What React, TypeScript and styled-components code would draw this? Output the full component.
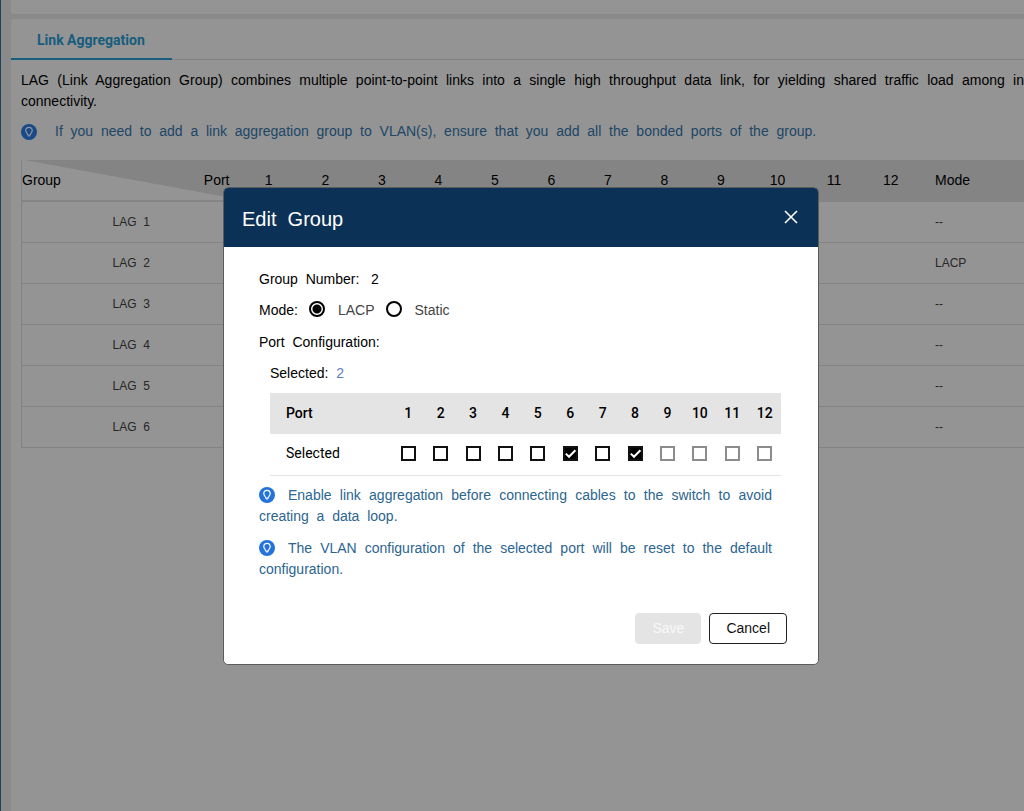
import React, { useState } from "react";
import styled, { createGlobalStyle } from "styled-components";

const Global = createGlobalStyle`
  * { box-sizing: border-box; }
  body { margin: 0; background: #eeeeee; font-family: "Liberation Sans", Arial, sans-serif; font-size: 14px; color: #000; overflow: hidden; }
`;

const Page = styled.div`
  display: flex;
  flex-direction: column;
  gap: 5px;
  min-height: 100vh;
  padding-left: 10px;
  border-left: 1px solid #3c70a0;
  background: #eeeeee;
`;

const Banner = styled.header`
  height: 14px;
  background: #fff;
  border-bottom-left-radius: 3px;
`;

const Panel = styled.main`
  flex: 1;
  background: #fff;
  border-top-left-radius: 3px;
  overflow: hidden;
`;

const TabBar = styled.nav`
  display: flex;
  height: 41px;
  border-bottom: 1px solid #dcdcdc;
`;

const Tab = styled.a`
  padding: 0 27px 0 26px;
  height: 41px;
  border-bottom: 2px solid #2ba0d8;
  font: bold 14px/42px Roboto, sans-serif;
  color: #2ba0d8;
  text-decoration: none;
`;

const Content = styled.div`
  padding: 10px 0 0 10px;
`;

const Intro = styled.p`
  margin: 0;
  line-height: 21px;
  text-align: justify;
  white-space: pre-wrap;
`;

const Note = styled.p`
  display: flex;
  align-items: center;
  gap: 18px;
  margin: 9px 0 0;
  line-height: 21px;
  white-space: pre-wrap;
  color: #3679b0;
`;

const GroupTable = styled.table`
  width: 100%;
  min-width: 1082px;
  margin-top: 18px;
  border-collapse: collapse;
  table-layout: fixed;
  font-size: 12px;
  color: #444;
  white-space: pre-wrap;

  th, td { height: 41px; padding: 0; border-bottom: 1px solid #e2e2e2; text-align: center; font-weight: normal; }
  thead th { font-size: 14px; background: #e4e4e4; color: #000; }
  tr > :first-child { border-left: 1px solid #e2e2e2; }
  tr > :last-child { padding-left: 16px; text-align: left; }
`;

const GroupCol = styled.col`
  width: 219px;
`;

const ModeCol = styled.col`
  width: 184px;
`;

const CornerLabels = styled.div`
  display: flex;
  justify-content: space-between;
  align-items: center;
  height: 40px;
  padding-right: 11px;
  background: linear-gradient(to top right, #fff 50%, #e4e4e4 51%);
`;

const Overlay = styled.div`
  position: fixed;
  inset: 0;
  display: flex;
  justify-content: center;
  align-items: flex-start;
  padding: 187px 0 0 18px;
  background: rgba(0, 0, 0, 0.42);
`;

const Dialog = styled.section`
  width: 596px;
  max-width: 100%;
  border: 1px solid #5c5c5c;
  border-radius: 5px;
  overflow: hidden;
  background: #fff;
  white-space: pre-wrap;
`;

const DialogHeader = styled.header`
  display: flex;
  justify-content: space-between;
  align-items: center;
  height: 59px;
  padding: 0 18px;
  background: #0c3156;
  color: #fff;
`;

const Title = styled.h2`
  margin: 0;
  padding-top: 3px;
  font-size: 20px;
  font-weight: normal;
`;

const CloseButton = styled.button`
  display: flex;
  padding: 2px 2px 4px;
  border: 0;
  background: none;
  color: #fff;
`;

const Body = styled.div`
  padding: 16px 37px 20px 35px;
`;

const Field = styled.div`
  display: flex;
  align-items: center;
  height: 31px;
`;

const ModeGroup = styled.fieldset`
  display: flex;
  align-items: center;
  height: 32px;
  margin: 0;
  padding: 0;
  border: 0;
`;

const Radio = styled.input`
  appearance: none;
  width: 16px;
  height: 16px;
  margin: 0 13px 3px 11px;
  border: 2px solid #000;
  border-radius: 50%;
  &:checked { background: radial-gradient(circle, #000 4px, #fff 5px); }
`;

const RadioLabel = styled.label`
  color: #444;
`;

const PortArea = styled.div`
  padding-left: 11px;
`;

const Count = styled.span`
  color: #5c7fbd;
`;

const PortTable = styled.table`
  width: 100%;
  margin-top: 5px;
  border-collapse: collapse;
  table-layout: fixed;
  font: 14px Roboto, sans-serif;
  th, td { height: 41px; padding: 0 0 2px; text-align: center; font-weight: 500; }
  thead { background: #e4e4e4; }
  tbody tr { border-bottom: 1px solid #e2e2e2; }
  tbody th { font-weight: normal; }
  tr > :first-child { padding-left: 16px; text-align: left; }
`;

const LabelCol = styled.col`
  width: 122px;
`;

const Check = styled.input`
  appearance: none;
  width: 15px;
  height: 15px;
  margin: 0;
  border: 2px solid #111;
  background: #fff;
  &:disabled { border-color: #8c8c8c; }
  &:checked { background: #000; }
`;

const CheckBox = styled.span`
  display: grid;
  justify-content: center;
  & > * { grid-area: 1 / 1; }
  svg { pointer-events: none; }
`;

const Hints = styled.div`
  display: flex;
  flex-direction: column;
  gap: 11px;
  padding: 9px 9px 0 0;
`;

const Hint = styled.p`
  margin: 0;
  line-height: 21px;
  text-align: justify;
  color: #2b6590;
  svg { margin-right: 13px; vertical-align: -3px; }
`;

const Actions = styled.footer`
  display: flex;
  justify-content: flex-end;
  gap: 8px;
  padding-top: 33px;
  margin-right: -6px;
`;

const Button = styled.button`
  height: 31px;
  padding: 0 16px;
  border: 1px solid #222;
  border-radius: 4px;
  background: #fff;
  color: #111;
  font: 14px "Liberation Sans", Arial, sans-serif;
  &:disabled { border-color: #e4e4e4; background: #e4e4e4; color: #f8f8f8; }
`;

const Bulb = ({ color = "#2373db" }: { color?: string }) => (
  <svg width="16" height="16" viewBox="0 0 16 16" aria-hidden="true">
    <circle cx="8" cy="8" r="8" fill={color} />
    <path
      d="M6.9 11.2C6.7 9.5 4.8 8.7 4.8 6.6a3.2 3.2 0 0 1 6.4 0c0 2.1-1.9 2.9-2.1 4.6z"
      fill="none"
      stroke="#fff"
      strokeWidth="1.2"
    />
    <path d="M7 12.2h2" stroke="#fff" strokeOpacity="0.7" />
  </svg>
);

const ports = Array.from({ length: 12 }, (_, i) => i + 1);
const groups = ["--", "LACP", "--", "--", "--", "--"];

export default function App() {
  const [mode, setMode] = useState("LACP");
  const [selected, setSelected] = useState([6, 8]);
  const toggle = (port: number) =>
    setSelected((s) => (s.includes(port) ? s.filter((p) => p !== port) : [...s, port]));

  return (
    <>
      <Global />
      <Page>
        <Banner />
        <Panel>
          <TabBar><Tab href="#lag">Link Aggregation</Tab></TabBar>
          <Content>
            <Intro>LAG  (Link  Aggregation  Group)  combines  multiple  point-to-point  links  into  a  single  high  throughput  data  link,  for  yielding  shared  traffic  load  among  in  connectivity.</Intro>
            <Note><Bulb color="#2a80ec" />If  you  need  to  add  a  link  aggregation  group  to  VLAN(s),  ensure  that  you  add  all  the  bonded  ports  of  the  group.</Note>
            <GroupTable>
              <colgroup>
                <GroupCol />
                {ports.map((p) => <col key={p} />)}
                <ModeCol />
              </colgroup>
              <thead>
                <tr>
                  <th><CornerLabels><span>Group</span><span>Port</span></CornerLabels></th>
                  {ports.map((p) => <th key={p}>{p}</th>)}
                  <th>Mode</th>
                </tr>
              </thead>
              <tbody>
                {groups.map((m, i) => (
                  <tr key={i}>
                    <td>{`LAG  ${i + 1}`}</td>
                    {ports.map((p) => <td key={p} />)}
                    <td>{m}</td>
                  </tr>
                ))}
              </tbody>
            </GroupTable>
          </Content>
        </Panel>
      </Page>
      <Overlay>
        <Dialog role="dialog" aria-modal="true" aria-labelledby="dialog-title">
          <DialogHeader>
            <Title id="dialog-title">Edit  Group</Title>
            <CloseButton aria-label="Close">
              <svg width="14" height="14" viewBox="0 0 14 14"><path d="M1 1l12 12M13 1L1 13" stroke="currentColor" strokeWidth="1.6" /></svg>
            </CloseButton>
          </DialogHeader>
          <Body>
            <Field>Group  Number:   2</Field>
            <ModeGroup>
              <span>Mode:</span>
              {["LACP", "Static"].map((m) => (
                <React.Fragment key={m}>
                  <Radio type="radio" name="mode" id={m} checked={mode === m} onChange={() => setMode(m)} />
                  <RadioLabel htmlFor={m}>{m}</RadioLabel>
                </React.Fragment>
              ))}
            </ModeGroup>
            <Field>Port  Configuration:</Field>
            <PortArea>
              <Field>Selected:  <Count>{selected.length}</Count></Field>
              <PortTable>
                <colgroup><LabelCol />{ports.map((p) => <col key={p} />)}</colgroup>
                <thead>
                  <tr><th>Port</th>{ports.map((p) => <th key={p}>{p}</th>)}</tr>
                </thead>
                <tbody>
                  <tr>
                    <th>Selected</th>
                    {ports.map((p) => (
                      <td key={p}>
                        <CheckBox>
                          <Check type="checkbox" aria-label={`Port ${p}`} disabled={p > 8} checked={selected.includes(p)} onChange={() => toggle(p)} />
                          {selected.includes(p) && (
                            <svg width="15" height="15" viewBox="0 0 15 15"><path d="M2.8 7.6l3.2 3.2 6.4-6.6" fill="none" stroke="#fff" strokeWidth="2" /></svg>
                          )}
                        </CheckBox>
                      </td>
                    ))}
                  </tr>
                </tbody>
              </PortTable>
            </PortArea>
            <Hints>
              <Hint><Bulb />Enable  link  aggregation  before  connecting  cables  to  the  switch  to  avoid  creating  a  data  loop.</Hint>
              <Hint><Bulb />The  VLAN  configuration  of  the  selected  port  will  be  reset  to  the  default  configuration.</Hint>
            </Hints>
            <Actions>
              <Button disabled>Save</Button>
              <Button>Cancel</Button>
            </Actions>
          </Body>
        </Dialog>
      </Overlay>
    </>
  );
}
